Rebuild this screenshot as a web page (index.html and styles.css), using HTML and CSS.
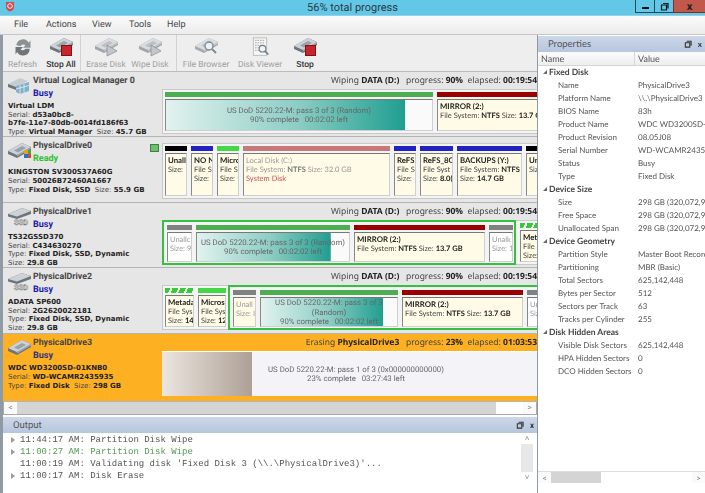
FILE: index.html
```html
<!DOCTYPE html>
<html lang="en">
<head>
  <meta charset="UTF-8" />
  <title>56% total progress</title>
  <link rel="stylesheet" href="styles.css">
</head>
<body>

<svg class="defs" width="0" height="0">
  <symbol id="hdd" viewBox="0 0 24 18">
    <path d="M1 9 L15 1 L24 5 V8 L10 16 L1 12Z" fill="#6d757b"/>
    <path d="M1 9 L15 1 L24 5 L10 13Z" fill="#ccd2d7"/>
    <path d="M7 8.500 L15 4 L19 6 L11 10.500Z" fill="#98a2aa"/>
    <path d="M10 13 L24 5 V6.500 L10 14.500Z" fill="#a4acb2"/>
  </symbol>
  <symbol id="ssd" viewBox="0 0 24 18">
    <path d="M1 6 L15 0 L24 3 V6 L10 11 L1 8.500Z" fill="#6d757b"/>
    <path d="M1 6 L15 0 L24 3 L10 8.500Z" fill="#ccd2d7"/>
    <text x="14" y="17" text-anchor="middle" font-family="Roboto, sans-serif" font-size="7.500" font-weight="700" fill="#f2f2f2" stroke="#7a7a7a" stroke-width=".5">SSD</text>
  </symbol>
  <symbol id="virtual" viewBox="0 0 24 18">
    <path d="M1 7 L13 1 L21 4 L9 10 L1 8.500Z" fill="#c5ccd2"/>
    <path d="M1 7 L9 10 V13 L1 10Z" fill="#6d757b"/>
    <path d="M9 9 L22 5 V14 L13 17 L9 15Z" fill="#7fb2c8"/>
    <path d="M13 8 V17M17 7 V15.500M9 12 L22 8.500" stroke="#e4f0f5" stroke-width=".8" fill="none"/>
  </symbol>
  <symbol id="stop-disk" viewBox="0 0 24 20">
    <use href="#hdd" width="24" height="18"/>
    <rect x="12.500" y="8.500" width="10" height="10" fill="#c8262c" stroke="#7d1518"/>
  </symbol>
  <symbol id="play-disk" viewBox="0 0 24 20">
    <use href="#hdd" width="24" height="18" opacity=".6"/>
    <path d="M13 8 L23 14 L13 19Z" fill="#c2c7cb" stroke="#8d9397" stroke-width=".8"/>
  </symbol>
  <symbol id="win-restore" viewBox="0 0 9 9">
    <path d="M3 1.500H8V6.500M1.500 3H6.500V8H1.500Z" fill="none" stroke="currentColor" stroke-width="1.200"/>
  </symbol>
</svg>

<div class="app">
  <div class="titlebar">
    <svg class="logo" viewBox="0 0 10 11"><path d="M1 1 H9 V6 Q9 9 5 10.500 Q1 9 1 6Z" fill="#d9454a"/><circle cx="5" cy="5" r="2.300" fill="none" stroke="#fff"/></svg>
    <span class="title">56% total progress</span>
    <div class="winbtns">
      <span class="winbtn"><i class="min-bar"></i></span>
      <span class="winbtn"><svg width="9" height="9"><use href="#win-restore"/></svg></span>
      <span class="winbtn winbtn-close">x</span>
    </div>
  </div>

  <ul class="menu">
    <li>File</li>
    <li>Actions</li>
    <li>View</li>
    <li>Tools</li>
    <li>Help</li>
  </ul>

  <div class="workspace">
    <div class="left">
      <div class="toolbar">
        <div class="tool tool-refresh off">
          <svg viewBox="0 0 24 24"><path d="M4 10 A8 8 0 0 1 19 7 L21 4 V13 H12 L15 10 A4 4 0 0 0 9 11Z" fill="#8b9195"/><path d="M20 14 A8 8 0 0 1 5 18 L3 21 V12 H12 L9 15 A4 4 0 0 0 15 14Z" fill="#6f7579"/></svg>
          <span>Refresh</span>
        </div>
        <div class="tool tool-stopall">
          <svg><use href="#stop-disk"/></svg>
          <span>Stop All</span>
        </div>
        <div class="tool-sep"></div>
        <div class="tool tool-erase off">
          <svg><use href="#play-disk"/></svg>
          <span>Erase Disk</span>
        </div>
        <div class="tool tool-wipe off">
          <svg><use href="#play-disk"/></svg>
          <span>Wipe Disk</span>
        </div>
        <div class="tool-sep tool-sep-wide"></div>
        <div class="tool tool-browser off">
          <svg viewBox="0 0 24 20"><use href="#hdd" width="24" height="18" opacity=".55"/><circle cx="15" cy="9" r="4" fill="#eef2f4" stroke="#7f8a92" stroke-width="1.400"/><path d="M18 12 L22 16" stroke="#7f8a92" stroke-width="2"/></svg>
          <span>File Browser</span>
        </div>
        <div class="tool tool-viewer off">
          <svg viewBox="0 0 24 24"><rect x="4" y="1" width="16" height="21" fill="#f6f6f6" stroke="#b5b5b5"/><path d="M6 4H18M6 7H18M6 10H14M6 13H12M6 16H12" stroke="#9a9a9a" stroke-dasharray="2 1"/><circle cx="15" cy="14" r="4" fill="#eef4f8" stroke="#6f7c84" stroke-width="1.300"/><path d="M18 17 L22 21" stroke="#6f7c84" stroke-width="2"/></svg>
          <span>Disk Viewer</span>
        </div>
        <div class="tool tool-stop">
          <svg><use href="#stop-disk"/></svg>
          <span>Stop</span>
        </div>
      </div>

      <div class="disk">
        <div class="info">
          <div class="info-head">
            <svg class="disk-icon"><use href="#virtual"/></svg>
            <div>
              <div class="disk-name">Virtual Logical Manager 0</div>
              <div class="state busy">Busy</div>
            </div>
          </div>
          <div class="spec">
            <b>Virtual LDM</b><br>
            Serial: <b>d53a0bc8-</b><br>
            <b>b7fe-11e7-80db-0014fd186f63</b><br>
            Type: <b>Virtual Manager</b>&nbsp; Size: <b>45.7 GB</b>
          </div>
        </div>
        <div class="layout">
          <div class="status">Wiping <b>DATA (D:)</b> &nbsp; progress: <b>90%</b> &nbsp;elapsed: <b>00:19:54</b></div>
          <div class="map">
            <div class="part w-268">
              <i class="bar bar-green"></i>
              <div class="box box-wipe fill-90"><p class="job">US DoD 5220.22-M: pass 3 of 3 (Random)<br>90% complete &nbsp; 00:02:02 left</p></div>
            </div>
            <div class="part w-140">
              <i class="bar bar-red"></i>
              <div class="box"><strong>MIRROR (2:)</strong><br>File System: <b>NTFS</b> Size: <b>13.7 GB</b></div>
            </div>
          </div>
        </div>
      </div>

      <div class="disk disk-tall">
        <div class="info">
          <div class="info-head info-head-large">
            <svg class="disk-icon"><use href="#hdd"/><rect x="17" y="8" width="4" height="4" fill="#e8a020"/><rect x="21" y="8" width="4" height="4" fill="#46a83c"/><rect x="17" y="12" width="4" height="4" fill="#2f6fc4"/><rect x="21" y="12" width="4" height="4" fill="#d84a30"/></svg>
            <div>
              <div class="disk-name">PhysicalDrive0</div>
              <div class="state ready">Ready</div>
            </div>
          </div>
          <div class="spec spec-large">
            <b>KINGSTON SV300S37A60G</b><br>
            Serial: <b>50026B72460A1667</b><br>
            Type: <b>Fixed Disk, SSD</b>&nbsp; Size: <b>55.9 GB</b>
          </div>
        </div>
        <div class="layout layout-idle">
          <i class="led"></i>
          <div class="map map-idle">
            <div class="part w-22"><i class="bar bar-black"></i><div class="box"><strong>Unall</strong><br>Size: </div></div>
            <div class="part w-22"><i class="bar bar-blue"></i><div class="box"><strong>NO N</strong><br>File S<br>Size:</div></div>
            <div class="part w-22"><i class="bar bar-lime"></i><div class="box"><strong>Micro</strong><br>File S<br>Size: 1</div></div>
            <div class="part w-147"><i class="bar bar-rose"></i><div class="box box-dim">Local Disk (C:)<br>File System: <b>NTFS</b> Size: 32.0 GB<br><span class="sys">System Disk</span></div></div>
            <div class="part w-22"><i class="bar bar-blue"></i><div class="box"><strong>ReFS</strong><br>File S<br>Size:</div></div>
            <div class="part w-33"><i class="bar bar-blue"></i><div class="box"><strong>ReFS_8G</strong><br>File Syst<br>Size: <b>8.0(</b></div></div>
            <div class="part w-65"><i class="bar bar-blue"></i><div class="box"><strong>BACKUPS (Y:)</strong><br>File System: <b>NTFS</b><br>Size: <b>14.7 GB</b></div></div>
            <div class="part w-30"><i class="bar bar-black"></i><div class="box"><strong>Unall</strong><br>Size: 1</div></div>
          </div>
        </div>
      </div>

      <div class="disk">
        <div class="info">
          <div class="info-head">
            <svg class="disk-icon"><use href="#ssd"/></svg>
            <div>
              <div class="disk-name">PhysicalDrive1</div>
              <div class="state busy">Busy</div>
            </div>
          </div>
          <div class="spec">
            <b>TS32GSSD370</b><br>
            Serial: <b>C434630270</b><br>
            Type: <b>Fixed Disk, SSD, Dynamic</b><br>
            Size: <b>29.8 GB</b>
          </div>
        </div>
        <div class="layout">
          <div class="status">Wiping <b>DATA (D:)</b> &nbsp; progress: <b>90%</b> &nbsp;elapsed: <b>00:19:54</b></div>
          <div class="map">
            <div class="selected selected-end">
              <div class="part w-25"><i class="bar bar-grey"></i><div class="box box-white box-dim">Unallc<br>Size: 9</div></div>
              <div class="part w-154"><i class="bar bar-green"></i><div class="box box-wipe fill-88"><p class="job">US DoD 5220.22-M: pass 3 of 3 (Random)<br>90% complete &nbsp; 00:02:02 left</p></div></div>
              <div class="part w-131"><i class="bar bar-red"></i><div class="box"><strong>MIRROR (2:)</strong><br>File System: <b>NTFS</b> Size: <b>13.7 GB</b></div></div>
              <div class="part w-24"><i class="bar bar-grey"></i><div class="box box-white box-dim">Unalk<br>Size: 1</div></div>
            </div>
            <div class="part w-30"><i class="bar bar-hatch"></i><div class="box"><strong>Meta</strong><br>File S<br>Size:</div></div>
          </div>
        </div>
      </div>

      <div class="disk disk-tall">
        <div class="info">
          <div class="info-head">
            <svg class="disk-icon"><use href="#ssd"/></svg>
            <div>
              <div class="disk-name">PhysicalDrive2</div>
              <div class="state busy">Busy</div>
            </div>
          </div>
          <div class="spec">
            <b>ADATA SP600</b><br>
            Serial: <b>2G2620022181</b><br>
            Type: <b>Fixed Disk, SSD, Dynamic</b><br>
            Size: <b>29.8 GB</b>
          </div>
        </div>
        <div class="layout">
          <div class="status">Wiping <b>DATA (D:)</b> &nbsp; progress: <b>90%</b> &nbsp;elapsed: <b>00:19:54</b></div>
          <div class="map">
            <div class="part w-29"><i class="bar bar-hatch"></i><div class="box"><strong>Metada</strong><br>File Sys<br>Size: <b>14</b></div></div>
            <div class="part w-28"><i class="bar bar-lime"></i><div class="box"><strong>Micros</strong><br>File Sys<br>Size: <b>12</b></div></div>
            <div class="selected">
              <div class="part w-23"><i class="bar bar-grey"></i><div class="box box-dim">Unall<br>Size: I</div></div>
              <div class="part w-138"><i class="bar bar-green"></i><div class="box box-wipe fill-90"><p class="job">US DoD 5220.22-M: pass 3 of 3 (Random)<br>90% complete &nbsp; 00:02:02 left</p></div></div>
              <div class="part w-121"><i class="bar bar-red"></i><div class="box"><strong>MIRROR (2:)</strong><br>File System: <b>NTFS</b> Size: <b>13.7 GB</b></div></div>
              <div class="part w-30"><i class="bar bar-grey"></i><div class="box box-white box-dim">Unallc<br>Size: 1</div></div>
            </div>
          </div>
        </div>
      </div>

      <div class="disk disk-active">
        <div class="info">
          <div class="info-head">
            <svg class="disk-icon"><use href="#hdd"/></svg>
            <div>
              <div class="disk-name">PhysicalDrive3</div>
              <div class="state busy">Busy</div>
            </div>
          </div>
          <div class="spec spec-large">
            <b>WDC WD3200SD-01KNB0</b><br>
            Serial: <b>WD-WCAMR2435935</b><br>
            Type: <b>Fixed Disk</b>&nbsp; Size: <b>298 GB</b>
          </div>
        </div>
        <div class="layout">
          <div class="status">Erasing <b>PhysicalDrive3</b> &nbsp; progress: <b>23%</b> &nbsp;elapsed: <b>01:03:53</b></div>
          <div class="erase"><p class="job">US DoD 5220.22-M: pass 1 of 3 (0x000000000000)<br>23% complete &nbsp; 03:27:43 left</p></div>
        </div>
      </div>

      <div class="hscroll">
        <span class="sb-btn">&lt;</span>
        <span class="sb-track"></span>
        <span class="sb-rest"></span>
        <span class="sb-btn">&gt;</span>
      </div>

      <div class="output">
        <div class="pane-head">
          <span>Output</span>
          <span class="pane-tools"><svg width="8" height="8"><use href="#win-restore"/></svg><b>x</b></span>
        </div>
        <div class="log">
          <ul>
            <li class="has-kids">11:44:17 AM: Partition Disk Wipe</li>
            <li class="has-kids ok">11:00:27 AM: Partition Disk Wipe</li>
            <li>11:00:19 AM: Validating disk 'Fixed Disk 3 (\\.\PhysicalDrive3)'...</li>
            <li class="has-kids">11:00:17 AM: Disk Erase</li>
          </ul>
          <div class="vscroll"><span>&#708;</span><i></i><span>&#709;</span></div>
        </div>
      </div>
    </div>

    <div class="props">
      <div class="pane-head">
        <span>Properties</span>
        <span class="pane-tools"><svg width="8" height="8"><use href="#win-restore"/></svg><b>x</b></span>
      </div>
      <div class="prop-cols"><span>Name</span><span>Value</span></div>
      <div class="prop-list">
        <div class="prop-group">Fixed Disk</div>
        <div class="prop"><span>Name</span><span>PhysicalDrive3</span></div>
        <div class="prop"><span>Platform Name</span><span>\\.\PhysicalDrive3</span></div>
        <div class="prop"><span>BIOS Name</span><span>83h</span></div>
        <div class="prop"><span>Product Name</span><span>WDC WD3200SD-01KNB0</span></div>
        <div class="prop"><span>Product Revision</span><span>08.05J08</span></div>
        <div class="prop"><span>Serial Number</span><span>WD-WCAMR2435935</span></div>
        <div class="prop"><span>Status</span><span>Busy</span></div>
        <div class="prop"><span>Type</span><span>Fixed Disk</span></div>
        <div class="prop-group">Device Size</div>
        <div class="prop"><span>Size</span><span>298 GB (320,072,933,376)</span></div>
        <div class="prop"><span>Free Space</span><span>298 GB (320,072,933,376)</span></div>
        <div class="prop"><span>Unallocated Span</span><span>298 GB (320,072,933,376)</span></div>
        <div class="prop-group">Device Geometry</div>
        <div class="prop"><span>Partition Style</span><span>Master Boot Record</span></div>
        <div class="prop"><span>Partitioning</span><span>MBR (Basic)</span></div>
        <div class="prop"><span>Total Sectors</span><span>625,142,448</span></div>
        <div class="prop"><span>Bytes per Sector</span><span>512</span></div>
        <div class="prop"><span>Sectors per Track</span><span>63</span></div>
        <div class="prop"><span>Tracks per Cylinder</span><span>255</span></div>
        <div class="prop-group">Disk Hidden Areas</div>
        <div class="prop"><span>Visible Disk Sectors</span><span>625,142,448</span></div>
        <div class="prop"><span>HPA Hidden Sectors</span><span>0</span></div>
        <div class="prop"><span>DCO Hidden Sectors</span><span>0</span></div>
      </div>
      <div class="prop-scroll">
        <span class="sb-btn">&lt;</span>
        <span class="sb-thumb"></span>
        <span class="sb-gap"></span>
        <span class="sb-btn">&gt;</span>
      </div>
    </div>
  </div>
</div>

</body>
</html>
```

FILE: styles.css
```css
* { box-sizing: border-box; margin: 0; padding: 0; }
html, body { height: 100%; background: #fff; overflow: hidden; }
body { font-family: Roboto, "Liberation Sans", sans-serif; font-size: 9px; color: #333; text-rendering: geometricPrecision; }
.defs { display: block; height: 0; }
.app { width: 705px; height: 493px; display: flex; flex-direction: column; filter: blur(0.4px); }

/* window chrome */
.titlebar {
  height: 16px;
  background: #63c8e8;
  border-bottom: 1px solid #8fd3e6;
  display: flex;
  align-items: center;
  justify-content: center;
  position: relative;
  flex: none;
}
.logo { position: absolute; left: 5px; top: 1px; width: 10px; height: 11px; }
.title { font-size: 11px; color: #2b3a42; margin-top: -1px; }
.winbtns { position: absolute; right: 0; top: 0; display: flex; }
.winbtn {
  width: 19px;
  height: 13px;
  border: 1px solid #1f4a5a;
  border-top: 0;
  border-right: 0;
  background: #63c8e8;
  color: #111;
  display: flex;
  align-items: center;
  justify-content: center;
}
.min-bar { display: block; width: 7px; height: 2px; background: #111; margin-top: 3px; }
.winbtn-close {
  width: 32px;
  background: #c2574c;
  border-color: #7d3028;
  font-weight: bold;
  font-size: 11px;
  line-height: 11px;
  color: #222;
}

.menu {
  list-style: none;
  height: 19px;
  flex: none;
  display: flex;
  align-items: center;
  padding-left: 14px;
  background: linear-gradient(#fafafa, #ececec);
  border-bottom: 1px solid #c6c6c6;
  font-size: 9px;
  color: #444;
}
.menu li:nth-child(1) { width: 32px; }
.menu li:nth-child(2) { width: 46px; }
.menu li:nth-child(3) { width: 37px; }
.menu li:nth-child(4) { width: 38px; }

.workspace { flex: 1; display: flex; min-height: 0; }
.left { width: 537px; flex: none; display: flex; flex-direction: column; border-left: 3px solid #8f9aa4; }

/* toolbar */
.toolbar {
  height: 37px;
  flex: none;
  display: flex;
  background: #eeeeee;
  border-bottom: 1px solid #bcbcbc;
}
.tool { display: flex; flex-direction: column; align-items: center; font-size: 8.500px; color: #333; padding-top: 2px; font-weight: 500; }
.tool svg { width: 24px; height: 20px; margin-bottom: 3px; }
.tool span { line-height: 10px; white-space: nowrap; }
.tool.off { color: #a0a0a0; font-weight: 400; }
.tool-refresh { width: 39px; }
.tool-stopall { width: 38px; }
.tool-erase { width: 46px; margin-left: 2px; }
.tool-wipe { width: 42px; }
.tool-browser { width: 52px; margin-left: 3px; }
.tool-viewer { width: 56px; }
.tool-stop { width: 34px; }
.tool-sep { width: 1px; background: #d2d2d2; }
.tool-sep-wide { margin-left: 5px; }

/* disk rows */
.disk {
  height: 65px;
  flex: none;
  display: flex;
  background: #e6e6e6;
  border-bottom: 1px solid #b4b4b4;
  overflow: hidden;
}
.disk-tall { height: 66px; }
.disk-active { height: 68px; background: #fdb022; }
.info { width: 159px; flex: none; padding: 3px 0 0 5px; color: #333; }
.info-head { display: flex; height: 27px; margin-left: -1px; }
.info-head-large { height: 28px; }
.disk-icon { width: 24px; height: 18px; margin: 2px 2px 0 0; flex: none; }
.disk-name { font-size: 8.800px; font-weight: 700; line-height: 12px; color: #444; white-space: nowrap; }
.state { font-size: 9px; font-weight: 700; line-height: 12px; margin-top: 1px; }
.busy { color: #1c1ca8; }
.disk-active .busy { color: #33337a; }
.ready { color: #2fc02f; }
.spec { font-size: 7px; line-height: 8.700px; color: #444; white-space: nowrap; font-family: "DejaVu Sans", sans-serif; }
.spec b { color: #222; }
.spec-large { line-height: 9px; }

.layout { flex: 1; min-width: 0; position: relative; }
.layout-idle { padding-top: 6px; }
.status {
  height: 17px;
  padding-top: 3px;
  text-align: right;
  font-size: 8.500px;
  line-height: 11px;
  white-space: nowrap;
  color: #444;
  font-family: "Noto Sans", sans-serif;
}
.status b { color: #222; }
.led {
  position: absolute;
  left: -12px;
  top: 7px;
  width: 9px;
  height: 8px;
  background: #6ec06e;
  border: 1px solid #3f7f3f;
}

/* partition map */
.map {
  height: 45px;
  width: 520px;
  display: flex;
  gap: 4px;
  background: #f4f4f4;
  box-shadow: inset 0 0 0 1px #c8c8c8;
}
.map-idle { height: 56px; }
.map > .part:first-child { margin-left: 3px; }
.part { flex: none; display: flex; flex-direction: column; gap: 2px; padding: 3px 0; min-width: 0; }
.w-22 { width: 22px; }
.w-23 { width: 23px; }
.w-24 { width: 24px; }
.w-25 { width: 25px; }
.w-28 { width: 28px; }
.w-29 { width: 29px; }
.w-30 { width: 30px; }
.w-33 { width: 33px; }
.w-65 { width: 65px; }
.w-121 { width: 121px; }
.w-131 { width: 131px; }
.w-138 { width: 138px; }
.w-140 { width: 140px; }
.w-147 { width: 147px; }
.w-154 { width: 154px; }
.w-268 { width: 268px; }
.bar { display: block; height: 5px; flex: none; }
.bar-green { background: #4cae50; }
.bar-red { background: #990000; }
.bar-black { background: #000; }
.bar-blue { background: #2222c0; }
.bar-lime { background: #44d844; }
.bar-rose { background: #c87878; }
.bar-grey { background: #808080; }
.bar-hatch { background: repeating-linear-gradient(115deg, #38c838 0 5px, #f0f8f0 5px 7px); }
.box {
  flex: 1;
  min-height: 0;
  border: 1px solid #cfcfcf;
  border-top-color: #777;
  border-left-color: #888;
  background: #fffbe6;
  padding: 2px 2px;
  overflow: hidden;
  white-space: nowrap;
  font-family: Lato, sans-serif;
  font-size: 7.500px;
  line-height: 9px;
  color: #444;
}
.box strong { color: #222; font-size: 7.800px; }
.box b { color: #222; }
.box-white { background: #fff; }
.box-dim { color: #999; }
.box-dim b { color: #777; }
.sys { color: #c85050; }
.box-wipe { background-color: #fafafa; background-repeat: no-repeat; background-image: linear-gradient(90deg, #e2f2ef, #8ccdc4 55%, #1f9e90); padding: 0; display: flex; }
.fill-90 { background-size: 90% 100%; }
.fill-88 { background-size: 88% 100%; }
.job { margin: auto; text-align: center; font-family: Roboto, sans-serif; font-size: 7.800px; line-height: 9.500px; color: #666; white-space: normal; }
.selected {
  flex: none;
  width: 400px;
  display: flex;
  gap: 4px;
  padding: 0 0 0 3px;
  border: 2px solid #35c040;
  margin-left: -2px;
}
.selected-end { margin-left: 0; width: 354px; }
.selected .part { padding: 3px 0 1px; }

.erase {
  height: 45px;
  width: 388px;
  display: flex;
  background-color: #f4f4f8;
  background-repeat: no-repeat;
  background-image: linear-gradient(90deg, #ece6e0, #ada096);
  background-size: 90px 100%;
  border-top: 1px solid #fff;
}

/* scrollbars */
.hscroll { height: 13px; flex: none; display: flex; background: #fff; border: 1px solid #a8a8a8; border-top: 0; margin-bottom: 2px; }
.sb-btn { width: 13px; flex: none; text-align: center; font-size: 8px; line-height: 12px; color: #777; background: #fafafa; }
.sb-track { width: 479px; background: #d4d4d4; }
.sb-rest { flex: 1; }

/* docked panes */
.pane-head {
  height: 16px;
  flex: none;
  display: flex;
  align-items: center;
  justify-content: space-between;
  padding: 0 3px 0 10px;
  background: linear-gradient(#cdd8e8, #b6c6de);
  font-size: 9.500px;
  color: #555;
}
.pane-tools { display: flex; align-items: center; gap: 6px; color: #333; font-size: 8px; }
.output { display: flex; flex-direction: column; height: 66px; flex: none; }
.log { height: 50px; display: flex; background: #fff; }
.log ul { flex: 1; list-style: none; padding: 1px 0 0 17px; font-family: "Liberation Mono", monospace; font-size: 9px; line-height: 12px; color: #555; }
.log li { position: relative; white-space: nowrap; }
.has-kids::before {
  content: "";
  position: absolute;
  left: -9px;
  top: 3px;
  border-left: 4px solid #999;
  border-top: 3px solid transparent;
  border-bottom: 3px solid transparent;
}
.log .ok { color: #4f9a4f; }
.vscroll { width: 14px; margin-right: 3px; flex: none; display: flex; flex-direction: column; font-size: 8px; color: #888; text-align: center; line-height: 11px; }
.vscroll i { flex: 1; background: #e8e8e8; margin: 0 1px; }

.props { flex: 1; min-width: 0; display: flex; flex-direction: column; padding-top: 1px; border-left: 1px solid #8f9aa4; overflow: hidden; font-family: Lato, sans-serif; }
.prop-cols {
  height: 14px;
  flex: none;
  display: grid;
  grid-template-columns: 97px 1fr;
  background: linear-gradient(#fbfbfb, #eee);
  border-bottom: 1px solid #d4d4d4;
  font-size: 9px;
  line-height: 13px;
  color: #555;
}
.prop-cols span { padding-left: 3px; }
.prop-cols span:first-child { border-right: 1px solid #d8d8d8; }
.prop-list { flex: 1; font-size: 8px; line-height: 13px; color: #555; white-space: nowrap; overflow: hidden; }
.prop-group { padding-left: 11px; font-weight: 700; color: #444; position: relative; font-size: 8.500px; }
.prop-group::before {
  content: "";
  position: absolute;
  left: 5px;
  top: 4px;
  border-right: 4px solid #666;
  border-top: 4px solid transparent;
}
.prop { display: grid; grid-template-columns: 80px 1fr; padding-left: 20px; }
.prop-scroll { height: 12px; flex: none; display: flex; margin-bottom: 10px; border-top: 1px solid #ddd; }
.sb-thumb { width: 50px; background: #d4d4d4; }
.sb-gap { flex: 1; }
```
